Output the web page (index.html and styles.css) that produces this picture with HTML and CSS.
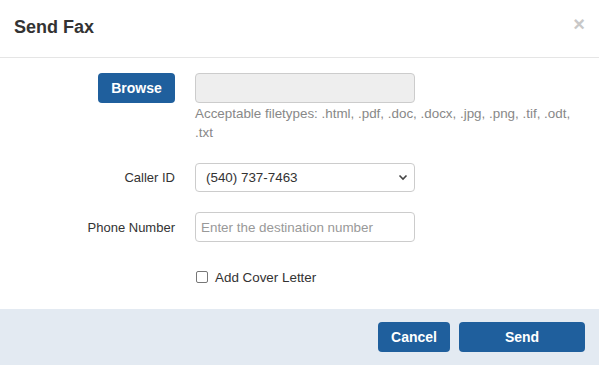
FILE: index.html
```html
<!DOCTYPE html>
<html lang="en">

<head>
    <meta charset="UTF-8">
    <meta name="viewport" content="width=device-width, initial-scale=1.0">
    <title>Send Fax</title>
    <link rel="stylesheet" href="styles.css">
</head>

<body>
    <div class="modal">
        <div class="modal-header">
            <h4 class="modal-title">Send Fax</h4>
            <button class="close" type="button">&times;</button>
        </div>

        <form class="modal-body">
            <div class="form-row file-row">
                <div class="label-col">
                    <button type="button" class="btn btn-browse">Browse</button>
                </div>
                <div class="control-col">
                    <div class="file-box"></div>
                    <p class="help-block">Acceptable filetypes: .html, .pdf, .doc, .docx, .jpg, .png, .tif, .odt, .txt</p>
                </div>
            </div>

            <div class="form-row">
                <label class="label-col" for="caller-id">Caller ID</label>
                <div class="control-col">
                    <div class="select-box" id="caller-id">
                        <span>(540) 737-7463</span>
                        <svg width="10" height="7" viewBox="0 0 10 7"><path d="M1.5 1.5 L5 5 L8.5 1.5" fill="none" stroke="#444" stroke-width="1.6"/></svg>
                    </div>
                </div>
            </div>

            <div class="form-row">
                <label class="label-col" for="phone">Phone Number</label>
                <div class="control-col">
                    <input type="text" id="phone" class="form-input" placeholder="Enter the destination number">
                </div>
            </div>

            <div class="form-row check-row">
                <div class="label-col"></div>
                <label class="control-col check-label">
                    <input type="checkbox" class="check">
                    Add Cover Letter
                </label>
            </div>
        </form>

        <div class="modal-footer">
            <button type="button" class="btn btn-cancel">Cancel</button>
            <button type="button" class="btn btn-send">Send</button>
        </div>
    </div>
</body>

</html>
```

FILE: styles.css
```css
* {
    margin: 0;
    padding: 0;
    box-sizing: border-box;
}

body {
    font-family: "Liberation Sans", Arial, sans-serif;
    font-size: 13px;
    color: #333;
    background-color: #fff;
    width: 599px;
    height: 365px;
    overflow: hidden;
}

.modal {
    display: flex;
    flex-direction: column;
    height: 365px;
}

.modal-header {
    display: flex;
    justify-content: space-between;
    align-items: flex-start;
    height: 58px;
    padding: 17px 14px 0 14px;
    border-bottom: 1px solid #e5e5e5;
}

.modal-title {
    font-size: 18px;
    font-weight: bold;
    color: #333;
}

.close {
    background: none;
    border: none;
    font-family: "Liberation Sans", Arial, sans-serif;
    font-size: 20px;
    font-weight: bold;
    line-height: 1;
    color: #c8c8c8;
    margin-top: -3px;
    margin-right: 0;
}

.modal-body {
    padding: 15px 0 16px 0;
    flex: 1;
}

.form-row {
    display: flex;
    align-items: center;
    gap: 20px;
    margin-bottom: 20px;
}

.file-row {
    align-items: flex-start;
    margin-bottom: 21px;
}

.check-row {
    margin-bottom: 0;
    height: 30px;
}

.label-col {
    width: 175px;
    flex-shrink: 0;
    display: flex;
    justify-content: flex-end;
    text-align: right;
    font-size: 13px;
    color: #333;
}

.control-col {
    width: 220px;
}

.btn {
    background-color: #1f5f9d;
    color: #fff;
    border: none;
    border-radius: 4px;
    font-family: "Liberation Sans", Arial, sans-serif;
    font-size: 14px;
    font-weight: bold;
    height: 30px;
    cursor: pointer;
}

.btn-browse {
    width: 77px;
}

.file-box {
    height: 30px;
    border: 1px solid #ccc;
    border-radius: 4px;
    background-color: #eee;
}

.help-block {
    width: 380px;
    color: #888;
    font-size: 13.4px;
    line-height: 19px;
    margin-top: 1px;
}

.select-box {
    display: flex;
    justify-content: space-between;
    align-items: center;
    height: 29px;
    padding: 0 6px 0 10px;
    border: 1px solid #ccc;
    border-radius: 4px;
    font-size: 13.4px;
    color: #333;
}

.form-input {
    width: 100%;
    height: 30px;
    padding: 0 5px;
    border: 1px solid #ccc;
    border-radius: 4px;
    font-family: "Liberation Sans", Arial, sans-serif;
    font-size: 13.4px;
    outline: none;
}

.form-input::placeholder {
    color: #999;
}

.check-label {
    display: flex;
    align-items: center;
    gap: 7px;
    font-size: 13.4px;
    color: #333;
}

.check {
    appearance: none;
    width: 12px;
    height: 12px;
    margin-left: 1px;
    border: 1px solid #777;
    border-radius: 2px;
    background: #fff;
}

.modal-footer {
    display: flex;
    justify-content: flex-end;
    gap: 9px;
    height: 56px;
    padding: 13px 14px;
    background-color: #e3eaf2;
}

.btn-cancel {
    width: 72px;
}

.btn-send {
    width: 126px;
}
```
